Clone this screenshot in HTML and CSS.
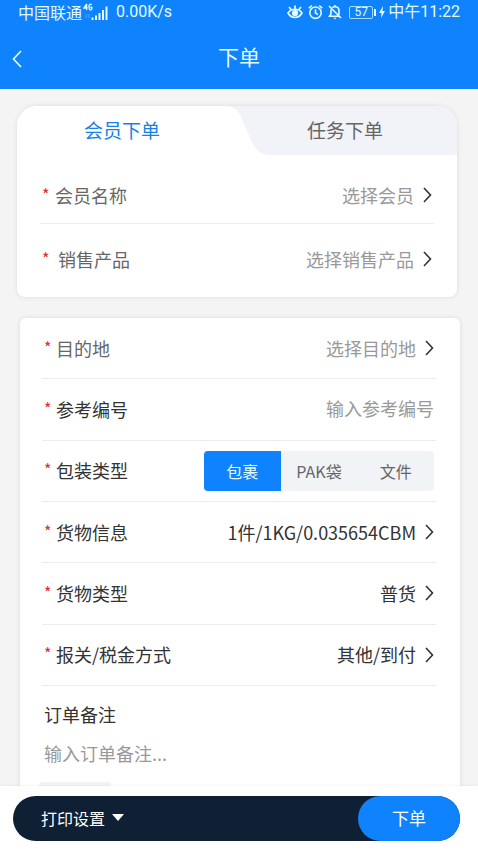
FILE: index.html
```html
<!DOCTYPE html>
<html lang="zh-CN">
<head>
<meta charset="utf-8">
<meta name="viewport" content="width=device-width, initial-scale=1">
<title>下单</title>
<link rel="stylesheet" href="styles.css">
</head>
<body>
<header class="header">
  <div class="status">
    <div class="status-group">
      <span>中国联通</span>
      <svg class="signal" width="25" height="18" viewBox="0 0 25 18" aria-hidden="true">
        <path d="M3.600 1 1 5h3.600M3.600 1v6M8.600 1.900C7.500 .6 6 1.200 6 4s1.500 3.500 2.700 2.200V4.200H7.400" fill="none" stroke="currentColor" stroke-width="1.400"/>
        <path d="M3 11v4M6 11v4" stroke="currentColor" opacity=".3"/>
        <path d="M9.500 14.500v2.500M13 12.500V17M16.500 10V17M20 7V17M23.500 3.500V17" stroke="currentColor" stroke-width="2"/>
      </svg>
      <span class="speed">0.00K/s</span>
    </div>
    <div class="status-group">
      <svg class="eye" width="16" height="16" viewBox="0 0 16 16" fill="none" stroke="currentColor" stroke-width="1.700" aria-hidden="true">
        <path d="M1 9c3.500-5 10.500-5 14 0-3.500 6-10.500 6-14 0ZM2 3l2 2.500M8 1.500v3M14 3l-2 2.500"/>
        <circle cx="8" cy="9" r="2.300" fill="currentColor"/>
      </svg>
      <svg class="alarm" width="15" height="16" viewBox="0 0 15 16" fill="none" stroke="currentColor" stroke-width="1.600" aria-hidden="true">
        <circle cx="7.500" cy="8.700" r="5.700"/>
        <path d="M7.500 5.200V9l2.500 1.600M.8 4.200l3-2.700M14.200 4.200l-3-2.700"/>
      </svg>
      <svg class="bell" width="14" height="16" viewBox="0 0 14 16" fill="none" stroke="currentColor" stroke-width="1.600" aria-hidden="true">
        <path d="M1 2l12 12M4.200 3.600C5 3 6 2.700 7 2.700c2.500 0 4 1.800 4 4v4M3 5.500V10l-1.500 2.300h9.700M7 1v2"/>
        <path d="M5.500 13.800h3L7 15.400Z" fill="currentColor" stroke="none"/>
      </svg>
      <span class="battery">57</span>
      <svg class="bolt" width="6" height="12" viewBox="0 0 6 12" aria-hidden="true"><path d="M4 0 0 7h2.500L2 12l4-7H3.500Z" fill="currentColor"/></svg>
      <time class="clock">中午11:22</time>
    </div>
  </div>
  <nav class="titlebar">
    <a class="back" href="#" aria-label="返回">
      <svg width="10" height="18" viewBox="0 0 10 18" fill="none" stroke="currentColor" stroke-width="1.700" aria-hidden="true"><path d="M9 1 1.500 9 9 17"/></svg>
    </a>
    <h1 class="title">下单</h1>
  </nav>
</header>

<main class="content">
  <section class="card member">
    <div class="tabs" role="tablist">
      <button class="tab active" type="button" role="tab" aria-selected="true">会员下单</button>
      <button class="tab" type="button" role="tab" aria-selected="false">
        <svg class="slant" width="42" height="49" viewBox="0 0 42 49" aria-hidden="true"><path d="M0 0C7 1 10 3 13 9L24 34C28 43 33 49 42 49H0Z" fill="#fff"/></svg>
        任务下单
      </button>
    </div>
    <div class="member-rows">
      <div class="row">
        <label class="label soft" for="member"><span class="req">*</span>会员名称</label>
        <button class="pick empty" id="member" type="button"><span class="value">选择会员</span><svg class="chevron" viewBox="0 0 9 16" aria-hidden="true"><path d="M1 1l6.500 7L1 15"/></svg></button>
      </div>
      <div class="row">
        <label class="label soft wide" for="product"><span class="req">*</span>销售产品</label>
        <button class="pick empty" id="product" type="button"><span class="value">选择销售产品</span><svg class="chevron" viewBox="0 0 9 16" aria-hidden="true"><path d="M1 1l6.500 7L1 15"/></svg></button>
      </div>
    </div>
  </section>

  <section class="card order">
    <div class="order-rows">
      <div class="row">
        <label class="label soft" for="dest"><span class="req">*</span>目的地</label>
        <button class="pick empty" id="dest" type="button"><span class="value">选择目的地</span><svg class="chevron" viewBox="0 0 9 16" aria-hidden="true"><path d="M1 1l6.500 7L1 15"/></svg></button>
      </div>
      <div class="row">
        <label class="label" for="ref"><span class="req">*</span>参考编号</label>
        <input class="text-input" id="ref" type="text" placeholder="输入参考编号">
      </div>
      <div class="row">
        <span class="label" id="pack-label"><span class="req">*</span>包装类型</span>
        <div class="segments" role="radiogroup" aria-labelledby="pack-label">
          <label class="segment"><input type="radio" name="pack" checked><span>包裹</span></label>
          <label class="segment"><input type="radio" name="pack"><span>PAK袋</span></label>
          <label class="segment"><input type="radio" name="pack"><span>文件</span></label>
        </div>
      </div>
      <div class="row">
        <label class="label" for="cargo"><span class="req">*</span>货物信息</label>
        <button class="pick" id="cargo" type="button"><span class="value">1件/1KG/0.035654CBM</span><svg class="chevron" viewBox="0 0 9 16" aria-hidden="true"><path d="M1 1l6.500 7L1 15"/></svg></button>
      </div>
      <div class="row">
        <label class="label" for="kind"><span class="req">*</span>货物类型</label>
        <button class="pick" id="kind" type="button"><span class="value">普货</span><svg class="chevron" viewBox="0 0 9 16" aria-hidden="true"><path d="M1 1l6.500 7L1 15"/></svg></button>
      </div>
      <div class="row">
        <label class="label" for="tax"><span class="req">*</span>报关/税金方式</label>
        <button class="pick" id="tax" type="button"><span class="value">其他/到付</span><svg class="chevron" viewBox="0 0 9 16" aria-hidden="true"><path d="M1 1l6.500 7L1 15"/></svg></button>
      </div>
    </div>
    <div class="note">
      <label class="note-label" for="note">订单备注</label>
      <textarea class="note-input" id="note" rows="1" placeholder="输入订单备注..."></textarea>
      <div class="chip"></div>
    </div>
  </section>
</main>

<footer class="footer">
  <div class="actions">
    <button class="print" type="button">打印设置<svg width="12" height="7" viewBox="0 0 12 7" aria-hidden="true"><path d="M0 0h12L6 7Z" fill="currentColor"/></svg></button>
    <button class="submit" type="submit">下单</button>
  </div>
</footer>
</body>
</html>
```
FILE: styles.css
```css
* { box-sizing: border-box; }

body {
  margin: 0;
  height: 100vh;
  display: flex;
  flex-direction: column;
  overflow: hidden;
  background: #f4f4f4;
  color: #333;
  font: 18px/26px "Noto Sans CJK SC", sans-serif;
}

button, input, textarea {
  font: inherit;
  color: inherit;
  border: 0;
  padding: 0;
  margin: 0;
  background: none;
  outline: 0;
}

.header {
  flex: none;
  background: #0f82fd;
  color: #e2fbff;
}

.status {
  display: flex;
  justify-content: space-between;
  height: 24px;
  padding: 0 18px;
  font-size: 16px;
  line-height: 22px;
}

.status-group { display: flex; align-items: center; }
.signal { margin: 0 8px 0 1px; }
.speed, .clock { font-family: Roboto, "Noto Sans CJK SC", sans-serif; }
.alarm, .bell { margin-left: 5px; }

.battery {
  position: relative;
  width: 24px;
  height: 13px;
  margin-left: 7px;
  border: 1px solid #a5dcff;
  border-radius: 2px;
  font: 12px/11px Roboto, sans-serif;
  text-align: center;
}

.battery::after {
  content: "";
  position: absolute;
  top: 2px;
  right: -4px;
  width: 2px;
  height: 7px;
  background: currentColor;
}

.bolt { margin: 0 3px 0 6px; }

.titlebar {
  display: grid;
  grid-template-columns: 40px 1fr 40px;
  align-items: center;
  height: 65px;
}

.back {
  display: flex;
  padding-left: 12px;
  padding-top: 4px;
  color: inherit;
}

.title {
  margin: 0;
  padding-bottom: 2px;
  font-size: 21px;
  font-weight: 400;
  line-height: 30px;
  text-align: center;
}

.content {
  flex: 1;
  min-height: 0;
  overflow: hidden;
}

.card {
  background: #fff;
  box-shadow: 0 0 5px rgba(0, 0, 0, .1);
}

.member {
  margin: 17px 21px 0 17px;
  padding-bottom: 3px;
  border-radius: 20px 20px 8px 8px;
}

.order {
  margin: 21px 18px 0 20px;
  border-radius: 6px;
}

.tabs {
  display: grid;
  grid-template-columns: 21fr 23fr;
  height: 49px;
  border-radius: 20px 20px 0 0;
  overflow: hidden;
}

.tab {
  position: relative;
  padding: 0 0 2px 6px;
  background: #f2f3f8;
  color: #666;
  font-size: 19px;
}

.tab.active {
  padding-left: 0;
  background: #fff;
  color: #1880e8;
}

.slant { position: absolute; left: 0; top: 0; }

.member-rows { padding: 12px 23px 0; }
.member-rows .row { height: 70px; }
.member-rows .row:first-child { height: 57px; }
.member-rows .row:last-child { border: 0; }

.order-rows {
  display: grid;
  grid-template-rows: repeat(6, 1fr);
  height: 368px;
  padding: 0 24px 0 22px;
}

.row {
  display: flex;
  align-items: center;
  justify-content: space-between;
  border-bottom: 1px solid #ececec;
}

.label { display: flex; }
.label, .value { padding-bottom: 1px; }
.label.soft { color: #666; }

.req {
  width: 14px;
  padding-left: 2px;
  color: #e0282e;
  font-size: 16px;
  line-height: 24px;
}

.member-rows .req { width: 15px; }
.member-rows .wide .req { width: 18px; }

.pick {
  display: flex;
  align-items: center;
  gap: 9px;
  padding-right: 2px;
}

.empty { color: #999; }

.chevron {
  width: 9px;
  height: 16px;
  fill: none;
  stroke: #333;
  stroke-width: 1.6px;
}

.text-input {
  flex: 1;
  min-width: 0;
  height: 30px;
  padding: 0 2px 2px 0;
  text-align: right;
}

::placeholder { color: #999; opacity: 1; }

.segments {
  display: grid;
  grid-template-columns: repeat(3, 1fr);
  width: 230px;
  height: 40px;
  margin-right: 2px;
  border-radius: 4px;
  overflow: hidden;
  background: #f2f3f7;
  color: #666;
  font-size: 16px;
}

.segment { position: relative; display: grid; }
.segment input { position: absolute; opacity: 0; }
.segment span { display: grid; place-items: center; }
.segment input:checked + span { background: #0f82fd; color: #e2fbff; }

.note {
  display: flex;
  flex-direction: column;
  padding: 15px 24px 0;
}

.note-input {
  height: 26px;
  margin-top: 13px;
  resize: none;
  overflow: hidden;
}

.chip {
  width: 72px;
  height: 30px;
  margin: 16px 0 0 -5px;
  border-radius: 4px;
  background: #f2f3f5;
}

.footer {
  flex: none;
  position: relative;
  padding: 10px 18px 9px 13px;
  background: #fff;
  box-shadow: 0 0 3px rgba(0, 0, 0, .08);
}

.actions {
  display: flex;
  justify-content: space-between;
  height: 45px;
  border-radius: 23px;
  background: #0f2035;
  color: #fff;
}

.print {
  display: flex;
  align-items: center;
  gap: 7px;
  padding: 0 0 2px 28px;
  font-size: 16px;
}

.submit {
  width: 102px;
  padding-bottom: 2px;
  border-radius: 23px;
  background: #0f82fd;
  font-size: 17px;
}
```
